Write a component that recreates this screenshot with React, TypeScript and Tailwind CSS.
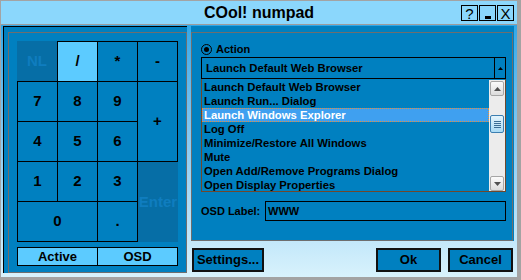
import React from "react";

type KeyDef = { label: string; cls?: string; kind?: "dim" | "lit" };

const keys: KeyDef[] = [
    {label: "NL", kind: "dim"},
    {label: "/", kind: "lit"},
    {label: "*"},
    {label: "-"},
    {label: "7"}, {label: "8"}, {label: "9"}, {label: "+", cls: "row-span-2"},
    {label: "4"}, {label: "5"}, {label: "6"},
    {label: "1"}, {label: "2"}, {label: "3"},
    {label: "Enter", kind: "dim", cls: "row-span-2 ml-px mt-px -mr-px -mb-px"},
    {label: "0", cls: "col-span-2"}, {label: "."},
];

const actions = [
    "Launch Default Web Browser",
    "Launch Run... Dialog",
    "Launch Windows Explorer",
    "Log Off",
    "Minimize/Restore All Windows",
    "Mute",
    "Open Add/Remove Programs Dialog",
    "Open Display Properties",
];

const Key = ({k}: { k: KeyDef }) => {
    if (k.kind === "dim") {
        return (
            <div className={`flex items-center justify-center bg-[#066ea6] text-[#0f7dbf] ${k.cls ?? ""}`}>
                {k.label}
            </div>
        )
    }
    return (
        <div className={`-mr-px -mb-px flex items-center justify-center border border-black text-black ${k.kind === "lit" ? "bg-[#5ccbff]" : ""} ${k.cls ?? ""}`}>
            {k.label}
        </div>
    )
}

const ScrollBtn = ({down}: { down?: boolean }) => (
    <div className="mx-px flex h-[15px] items-center justify-center rounded-[2px] border border-[#a6a6a6] bg-gradient-to-b from-[#fbfbfb] to-[#dcdcdc]">
        <svg width="7" height="4" viewBox="0 0 7 4">
            {down ? <path d="M0 0h7L3.5 4z" fill="#505050"/> : <path d="M0 4h7L3.5 0z" fill="#505050"/>}
        </svg>
    </div>
)

const TitleBtn = ({children}: { children: React.ReactNode }) => (
    <div className="flex h-[16px] w-[17px] items-center justify-center border border-black text-[15px] leading-none text-black">
        {children}
    </div>
)

export default function App() {
    return (
        <div className="h-[280px] w-[521px] bg-[#a3a3a3] pb-[3px] pl-px pr-[4px] pt-px font-['Liberation_Sans',Arial,sans-serif]">
            <div className="flex h-full flex-col">
                {/* title bar */}
                <div className="relative flex h-[24px] shrink-0 items-center justify-center border-b border-[#9c9c9c] bg-[#8bd7fc]">
                    <span className="text-[16px] font-bold text-black">COol! numpad</span>
                    <div className="absolute right-[3px] top-[4px] flex gap-px">
                        <TitleBtn>?</TitleBtn>
                        <TitleBtn><span className="mt-[9px] h-[3px] w-[6px] bg-black"/></TitleBtn>
                        <TitleBtn>X</TitleBtn>
                    </div>
                </div>

                <div className="flex flex-1 bg-gradient-to-b from-[#30a8e8] to-[#d8f2fc] pl-[2px] pt-px">
                    {/* keypad panel */}
                    <div className="flex h-[247px] w-[184px] flex-col border-l border-t border-black bg-[#0080c0] pl-[4px] pt-[5px]">
                        <div className="flex flex-1 flex-col border border-[#6e6e6e] pl-[8px] pt-[8px]">
                            <div className="grid grid-cols-[repeat(4,40px)] grid-rows-[repeat(5,40px)] text-[15px] font-bold">
                                {keys.map((k, i) => <Key k={k} key={i}/>)}
                            </div>
                            <div className="mt-[6px] flex h-[19px] text-[13px] font-bold text-black">
                                <div className="flex w-[81px] items-center justify-center border border-black bg-[#5ccbff] pt-px">Active</div>
                                <div className="-ml-px flex w-[81px] items-center justify-center border border-black bg-[#5ccbff] pt-px">OSD</div>
                            </div>
                        </div>
                    </div>

                    {/* action panel */}
                    <div className="ml-[4px] flex w-[323px] flex-col">
                        <div className="flex h-[215px] flex-col bg-[#0080c0] pr-px pt-[6px]">
                            <div className="flex flex-1 flex-col border border-[#6e6e6e] pl-[9px] pr-[6px] pt-[11px] text-black">
                                <div className="flex h-[11px] items-center gap-[4px]">
                                    <div className="flex h-[11px] w-[11px] items-center justify-center rounded-full border border-black">
                                        <div className="h-[5px] w-[5px] rounded-full bg-black"/>
                                    </div>
                                    <span className="text-[11px] font-bold">Action</span>
                                </div>

                                <div className="mt-[2px] flex h-[22px] border border-black">
                                    <div className="flex flex-1 items-center pl-[4px] text-[11.3px] font-bold">Launch Default Web Browser</div>
                                    <div className="flex w-[11px] items-center justify-center border-l border-black">
                                        <svg width="5" height="3" viewBox="0 0 5 3"><path d="M0 3h5L2.5 0z" fill="#000"/></svg>
                                    </div>
                                </div>

                                <div className="flex h-[113px] overflow-hidden border-x border-b border-[#70482c] pt-px">
                                    <div className="flex-1 text-[11.3px] font-bold">
                                        {actions.map((a, i) => (
                                            <div key={i}
                                                 className={`flex h-[14px] items-center pl-[2px] ${i === 2 ? "bg-[#3fa0f0] text-white outline-1 outline-dotted outline-[#e8903c] -outline-offset-1" : ""}`}>
                                                {a}
                                            </div>
                                        ))}
                                    </div>
                                    <div className="flex w-[16px] flex-col bg-[#ececec] pt-px">
                                        <ScrollBtn/>
                                        <div className="mx-px mt-[19px] flex h-[18px] flex-col items-center justify-center gap-px rounded-[2px] border border-[#3c7fb1] bg-gradient-to-b from-[#e4f4fc] to-[#a9daf5]">
                                            <div className="h-px w-[7px] bg-[#3c6e96]"/>
                                            <div className="h-px w-[7px] bg-[#3c6e96]"/>
                                            <div className="h-px w-[7px] bg-[#3c6e96]"/>
                                            <div className="h-px w-[7px] bg-[#3c6e96]"/>
                                        </div>
                                        <div className="flex-1"/>
                                        <ScrollBtn down/>
                                    </div>
                                </div>

                                <div className="mt-[9px] flex h-[20px] items-center">
                                    <span className="w-[64px] text-[11px] font-bold">OSD Label:</span>
                                    <div className="flex h-full flex-1 items-center border border-black pl-[2px] text-[11px] font-bold">WWW</div>
                                </div>
                            </div>
                        </div>

                        <div className="mt-[7px] flex h-[24px] pl-px pr-px text-[13px] font-bold text-black">
                            <button className="w-[72px] border-2 border-[#111] bg-[#0080c0]">Settings...</button>
                            <div className="flex-1"/>
                            <button className="w-[65px] border-2 border-[#111] bg-[#0080c0]">Ok</button>
                            <button className="ml-[7px] w-[65px] border-2 border-[#111] bg-[#0080c0]">Cancel</button>
                        </div>
                    </div>
                </div>
            </div>
        </div>
    )
}
